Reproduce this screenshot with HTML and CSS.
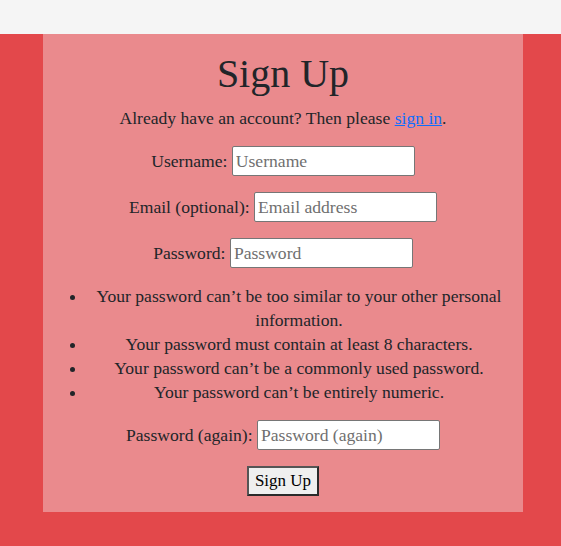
FILE: index.html
```html
<!DOCTYPE html>
<html lang="en">
<head>
<meta charset="utf-8">
<title>Sign Up</title>
<link rel="stylesheet" href="styles.css">
</head>
<body>
<header class="topbar"></header>
<main class="page">
  <section class="card">
    <h1 class="title">Sign Up</h1>
    <p class="row">Already have an account? Then please <a href="#" class="link">sign in</a>.</p>
    <form class="form">
      <p class="row"><label for="u">Username:</label> <input id="u" class="field" type="text" placeholder="Username"></p>
      <p class="row"><label for="e">Email (optional):</label> <input id="e" class="field" type="email" placeholder="Email address"></p>
      <p class="row"><label for="p1">Password:</label> <input id="p1" class="field" type="password" placeholder="Password"></p>
      <ul class="rules">
        <li>Your password can’t be too similar to your other personal information.</li>
        <li>Your password must contain at least 8 characters.</li>
        <li>Your password can’t be a commonly used password.</li>
        <li>Your password can’t be entirely numeric.</li>
      </ul>
      <p class="row"><label for="p2">Password (again):</label> <input id="p2" class="field" type="password" placeholder="Password (again)"></p>
      <p class="row"><button type="submit" class="btn">Sign Up</button></p>
    </form>
  </section>
</main>
</body>
</html>
```
FILE: styles.css
```css
html, body {
  margin: 0;
  padding: 0;
}
body {
  background: #e3484b;
  font-family: "Liberation Serif", "Times New Roman", serif;
  font-size: 17.6px;
  line-height: 24px;
  color: #212529;
  height: 546px;
}
.topbar {
  height: 34px;
  background: #f5f5f5;
}
.page {
  padding-left: 43px;
}
.card {
  display: flow-root;
  width: 480px;
  box-sizing: border-box;
  background: #ea8a8d;
  padding: 16px 12px 0;
  text-align: center;
}
.title {
  margin: 0 0 8px;
  font-size: 40px;
  font-weight: 400;
  line-height: 48px;
}
.row {
  margin: 0 0 16px;
}
.form {
  margin: 0;
}
.link {
  color: #0d6efd;
}
.field {
  width: 183px;
  height: 30px;
  box-sizing: border-box;
  border: 1px solid #767676;
  border-radius: 2px;
  padding: 1px 3px;
  font-family: inherit;
  font-size: 17.6px;
  vertical-align: baseline;
  background: #fff;
  color: #212529;
}
.field::placeholder {
  color: #6f6f6f;
}
.rules {
  margin: 0 0 16px;
  padding-left: 32px;
}
.btn {
  height: 30px;
  padding: 0 6px;
  font-family: inherit;
  font-size: 17px;
  color: #000;
  background: #efefef;
  border: 2px solid #2a2a2a;
  border-top-color: #555;
  border-left-color: #555;
  border-radius: 0;
}
```
